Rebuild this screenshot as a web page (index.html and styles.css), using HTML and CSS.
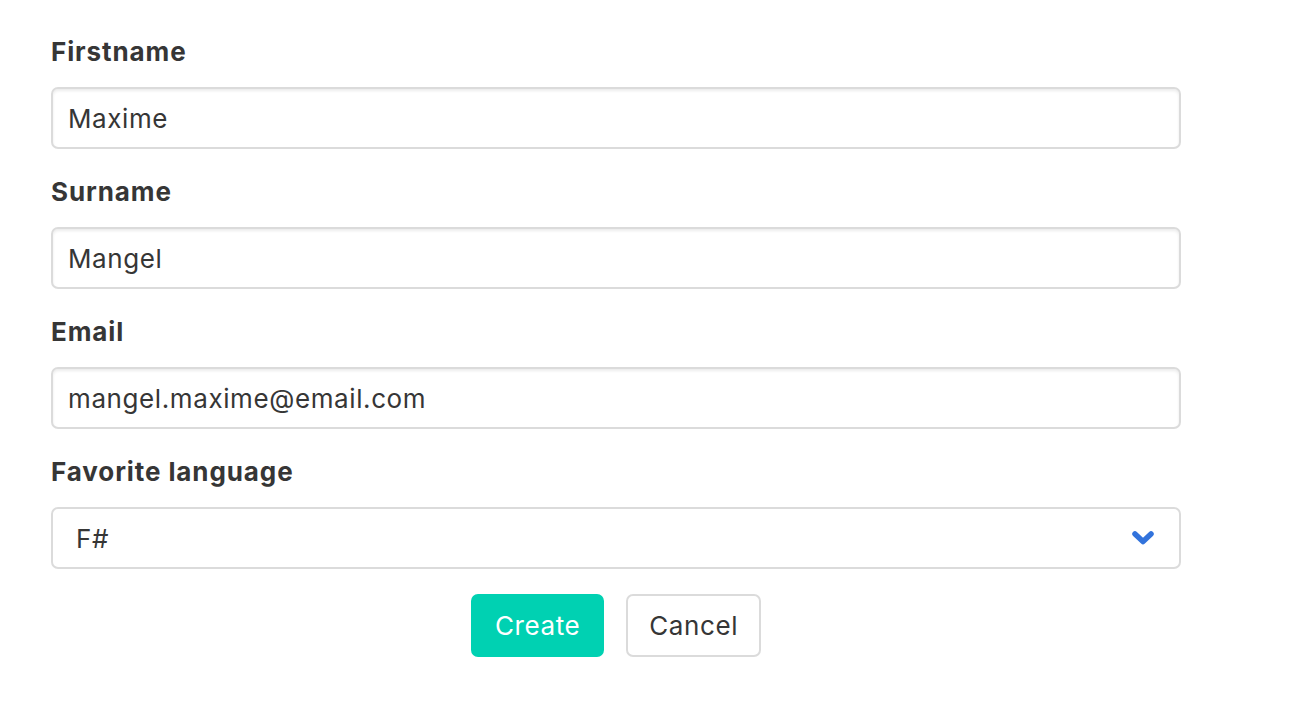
FILE: index.html
```html
<!DOCTYPE html>
<html>
<head>
<meta charset="utf-8">
<link rel="stylesheet" href="styles.css">
</head>
<body>
<form class="form">
  <div class="field">
    <label class="label">Firstname</label>
    <div class="input">Maxime</div>
  </div>
  <div class="field">
    <label class="label">Surname</label>
    <div class="input">Mangel</div>
  </div>
  <div class="field">
    <label class="label">Email</label>
    <div class="input">mangel.maxime@email.com</div>
  </div>
  <div class="field">
    <label class="label">Favorite language</label>
    <div class="input select">
      <span class="select-value">F#</span>
      <svg class="chevron" width="24" height="16" viewBox="0 0 24 16"><path d="M4 4 L12 11.5 L20 4" fill="none" stroke="#3273dc" stroke-width="5.5" stroke-linecap="round" stroke-linejoin="round"/></svg>
    </div>
  </div>
  <div class="buttons">
    <button type="button" class="button primary">Create</button>
    <button type="button" class="button">Cancel</button>
  </div>
</form>
</body>
</html>
```
FILE: styles.css
```css
* { box-sizing: border-box; }
html, body { margin: 0; background: #fff; }
body {
  font-family: Inter, "Noto Sans", sans-serif;
  color: #363636;
  padding: 34px 0 0 51px;
}
.form { width: 1130px; }
.field { margin-bottom: 25px; }
.field:last-of-type { margin-bottom: 21px; }
.label {
  display: block;
  font-size: 26px;
  letter-spacing: 0.9px;
  font-weight: 700;
  line-height: 36px;
  margin-bottom: 17px;
}
.input {
  height: 62px;
  border: 2px solid #dbdbdb;
  border-radius: 7px;
  box-shadow: inset 0 2px 3px rgba(10,10,10,0.08);
  padding: 0 15px;
  display: flex;
  align-items: center;
  font-size: 26px;
  letter-spacing: 0.6px;
  color: #363636;
}
.select {
  box-shadow: none;
  padding: 0 24px 0 23px;
  justify-content: space-between;
}
.chevron { display: block; }
.buttons {
  display: flex;
  justify-content: center;
  gap: 22px;
}
.button {
  height: 63px;
  border: 2px solid #dbdbdb;
  border-radius: 7px;
  background: #fff;
  color: #363636;
  font-family: inherit;
  font-size: 26px;
  letter-spacing: 0.6px;
  padding: 0 21px;
}
.button.primary {
  background: #00d1b2;
  border-color: #00d1b2;
  color: #fff;
  padding: 0 22px;
}
```
